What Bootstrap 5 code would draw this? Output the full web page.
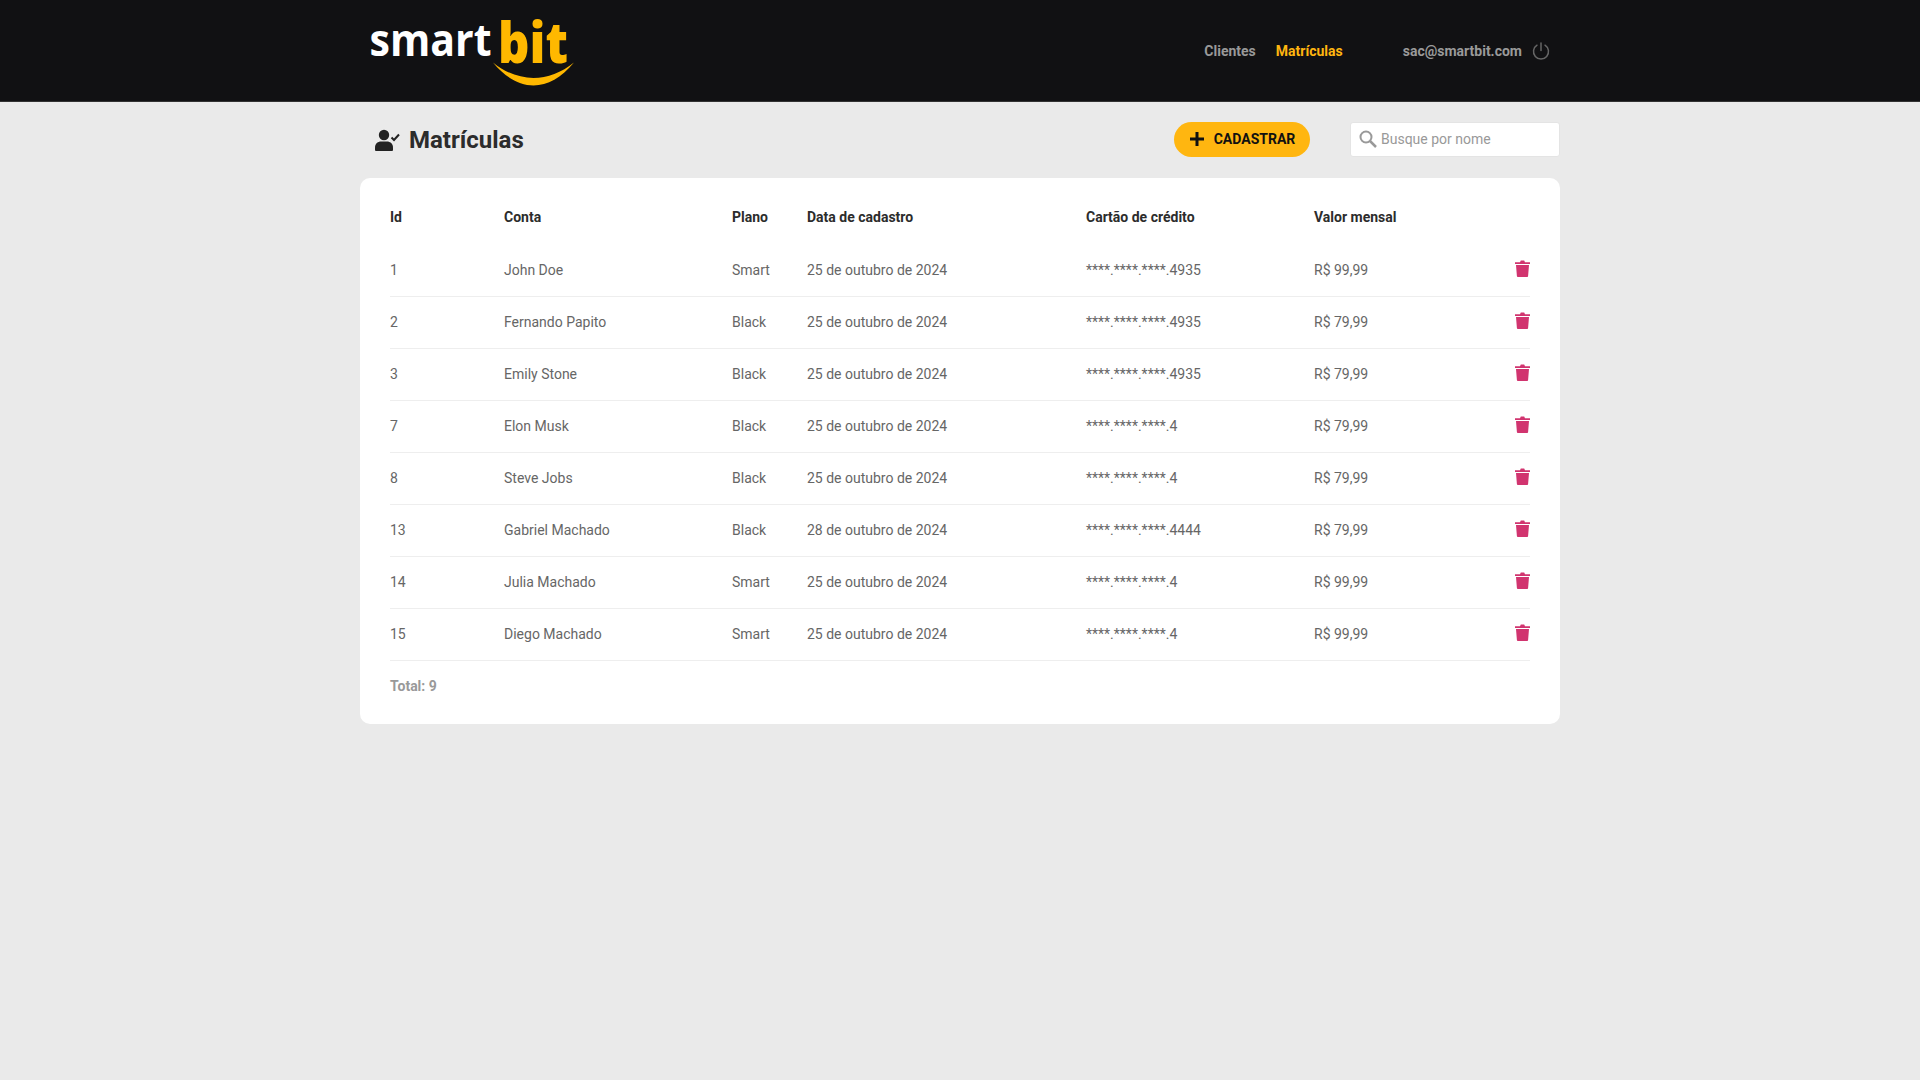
<!DOCTYPE html>
<html lang="pt-BR">
<head>
<meta charset="utf-8">
<title>Smart Bit</title>
<link href="https://cdn.jsdelivr.net/npm/bootstrap@5.3.0/dist/css/bootstrap.min.css" rel="stylesheet">
<style>
body{background:#eaeaea;font-family:Roboto,"Liberation Sans",sans-serif;font-size:14px;color:#666;min-height:1080px}
.sb-head{height:102px;background:#111113;border-bottom:1px solid #333}
.sb-wrap{width:1200px;margin:0 auto}
.sb-logo{margin-left:8px;display:block;overflow:visible}
.sb-logo text{font-family:"Open Sans",sans-serif;font-weight:700}
.sb-logo .sb-bit{font-weight:800}
.sb-nav{font-weight:700;font-size:14px;padding-right:10px}
.sb-nav a{color:#999;text-decoration:none}
.sb-nav a.sb-on{color:#ffb610}
.sb-nav a,.sb-user{position:relative;top:1px}
.sb-user{color:#9a9a9a;margin-left:60px}
.sb-power{margin-left:10px}
.sb-bar{height:76px}
.sb-ticon{margin-left:15px}
.sb-title{font-size:24px;font-weight:700;color:#2c2c2c;margin:0 0 0 9px;line-height:1}
.sb-btn{background:#ffb610;color:#111;border:0;border-radius:20px;height:35px;width:136px;font-size:14px;font-weight:700;gap:9px;margin-bottom:2px}
.sb-btn:hover{background:#ffb610;color:#111}
.sb-search{width:210px;height:35px;background:#fff;border:1px solid #e4e4e4;border-radius:3px;margin:0 0 2px 40px;padding-left:8px;gap:4px}
.sb-search input{border:0;outline:0;width:170px;font-size:14px;color:#333;padding:0;background:transparent}
.sb-search input::placeholder{color:#999}
.sb-card{background:#fff;border-radius:10px;padding:16px 30px 24px;height:546px}
.sb-table{table-layout:fixed;width:1140px;border-collapse:collapse}
.sb-table th{font-weight:700;color:#2c2c2c;height:50px;padding:0 0 3px;border:0}
.sb-table td{height:52px;padding:0;color:#666;border-bottom:1px solid #eee}
.sb-table tbody tr:first-child td{padding-top:2px}
.sb-table tbody tr:first-child td:last-child{padding-top:0}
.sb-table td:last-child{text-align:right}
.sb-table td svg{display:inline-block;margin-top:-5px}
.sb-total{font-weight:700;color:#999;margin-top:15px;font-size:14px}
</style>
</head>
<body>
<header class="sb-head">
<div class="sb-wrap h-100 d-flex align-items-center justify-content-between">
<svg class="sb-logo" width="215" height="76" viewBox="0 0 215 76" aria-label="Smart Bit">
<text x="1.500" y="42.500" font-size="44" fill="#fff" textLength="122" lengthAdjust="spacingAndGlyphs">smart</text>
<text class="sb-bit" x="130" y="50" font-size="57" fill="#ffb800" textLength="70" lengthAdjust="spacingAndGlyphs">bit</text>
<path d="M125 49.500C150 80 181 80 206 49.500C181 70 150 70 125 49.500Z" fill="#ffb800"/>
</svg>
<nav class="sb-nav d-flex align-items-center">
<a href="#" class="me-3 pe-1">Clientes</a>
<a href="#" class="sb-on">Matrículas</a>
<span class="sb-user">sac@smartbit.com</span>
<svg class="sb-power" width="18" height="18" viewBox="0 0 18 18" fill="none" stroke="#666" stroke-width="1.500" stroke-linecap="round"><path d="M5 3.200a7.500 7.500 0 1 0 8 0"/><path d="M9 1v7.500"/></svg>
</nav>
</div>
</header>
<main class="sb-wrap">
<div class="sb-bar d-flex align-items-center">
<svg class="sb-ticon" width="25" height="22" viewBox="0 0 25 22" fill="#222"><circle cx="9" cy="6" r="5.200"/><path d="M0 21v-2.500C0 14.500 3 12.500 6 12.500h6c3 0 6 2 6 6V21a1 1 0 0 1-1 1H1a1 1 0 0 1-1-1Z"/><path d="M16.500 8.500l2.500 2.500 5-5.500" fill="none" stroke="#222" stroke-width="2"/></svg>
<h1 class="sb-title flex-grow-1">Matrículas</h1>
<button type="button" class="btn sb-btn d-flex align-items-center justify-content-center p-0">
<svg width="16" height="16" viewBox="0 0 16 16"><path d="M8 1v14M1 8h14" stroke="#111" stroke-width="3"/></svg>CADASTRAR</button>
<label class="sb-search d-flex align-items-center">
<svg width="18" height="18" viewBox="0 0 18 18" fill="none" stroke="#999" stroke-width="2"><circle cx="7" cy="7" r="5.500"/><path d="M11 11l6 6" stroke-width="2.500"/></svg>
<input type="text" placeholder="Busque por nome">
</label>
</div>
<section class="sb-card">
<table class="sb-table">
<colgroup><col style="width:114px"><col style="width:228px"><col style="width:75px"><col style="width:279px"><col style="width:228px"><col style="width:176px"><col style="width:40px"></colgroup>
<thead><tr><th>Id</th><th>Conta</th><th>Plano</th><th>Data de cadastro</th><th>Cartão de crédito</th><th>Valor mensal</th><th></th></tr></thead>
<tbody>
<tr><td>1</td><td>John Doe</td><td>Smart</td><td>25 de outubro de 2024</td><td>****.****.****.4935</td><td>R$ 99,99</td><td><svg width="15" height="17" viewBox="0 0 15 17" fill="#d1346f"><path d="M0 2.200h5l.8-1.700h3.400l.8 1.700h5v1.800H0ZM1 5h13l-.9 11a1 1 0 0 1-1 1H2.900a1 1 0 0 1-1-1Z"/></svg></td></tr>
<tr><td>2</td><td>Fernando Papito</td><td>Black</td><td>25 de outubro de 2024</td><td>****.****.****.4935</td><td>R$ 79,99</td><td><svg width="15" height="17" viewBox="0 0 15 17" fill="#d1346f"><path d="M0 2.200h5l.8-1.700h3.400l.8 1.700h5v1.800H0ZM1 5h13l-.9 11a1 1 0 0 1-1 1H2.900a1 1 0 0 1-1-1Z"/></svg></td></tr>
<tr><td>3</td><td>Emily Stone</td><td>Black</td><td>25 de outubro de 2024</td><td>****.****.****.4935</td><td>R$ 79,99</td><td><svg width="15" height="17" viewBox="0 0 15 17" fill="#d1346f"><path d="M0 2.200h5l.8-1.700h3.400l.8 1.700h5v1.800H0ZM1 5h13l-.9 11a1 1 0 0 1-1 1H2.900a1 1 0 0 1-1-1Z"/></svg></td></tr>
<tr><td>7</td><td>Elon Musk</td><td>Black</td><td>25 de outubro de 2024</td><td>****.****.****.4</td><td>R$ 79,99</td><td><svg width="15" height="17" viewBox="0 0 15 17" fill="#d1346f"><path d="M0 2.200h5l.8-1.700h3.400l.8 1.700h5v1.800H0ZM1 5h13l-.9 11a1 1 0 0 1-1 1H2.900a1 1 0 0 1-1-1Z"/></svg></td></tr>
<tr><td>8</td><td>Steve Jobs</td><td>Black</td><td>25 de outubro de 2024</td><td>****.****.****.4</td><td>R$ 79,99</td><td><svg width="15" height="17" viewBox="0 0 15 17" fill="#d1346f"><path d="M0 2.200h5l.8-1.700h3.400l.8 1.700h5v1.800H0ZM1 5h13l-.9 11a1 1 0 0 1-1 1H2.900a1 1 0 0 1-1-1Z"/></svg></td></tr>
<tr><td>13</td><td>Gabriel Machado</td><td>Black</td><td>28 de outubro de 2024</td><td>****.****.****.4444</td><td>R$ 79,99</td><td><svg width="15" height="17" viewBox="0 0 15 17" fill="#d1346f"><path d="M0 2.200h5l.8-1.700h3.400l.8 1.700h5v1.800H0ZM1 5h13l-.9 11a1 1 0 0 1-1 1H2.900a1 1 0 0 1-1-1Z"/></svg></td></tr>
<tr><td>14</td><td>Julia Machado</td><td>Smart</td><td>25 de outubro de 2024</td><td>****.****.****.4</td><td>R$ 99,99</td><td><svg width="15" height="17" viewBox="0 0 15 17" fill="#d1346f"><path d="M0 2.200h5l.8-1.700h3.400l.8 1.700h5v1.800H0ZM1 5h13l-.9 11a1 1 0 0 1-1 1H2.900a1 1 0 0 1-1-1Z"/></svg></td></tr>
<tr><td>15</td><td>Diego Machado</td><td>Smart</td><td>25 de outubro de 2024</td><td>****.****.****.4</td><td>R$ 99,99</td><td><svg width="15" height="17" viewBox="0 0 15 17" fill="#d1346f"><path d="M0 2.200h5l.8-1.700h3.400l.8 1.700h5v1.800H0ZM1 5h13l-.9 11a1 1 0 0 1-1 1H2.900a1 1 0 0 1-1-1Z"/></svg></td></tr>
</tbody>
</table>
<div class="sb-total">Total: 9</div>
</section>
</main>
<script src="https://cdn.jsdelivr.net/npm/bootstrap@5.3.0/dist/js/bootstrap.bundle.min.js"></script>
</body>
</html>
